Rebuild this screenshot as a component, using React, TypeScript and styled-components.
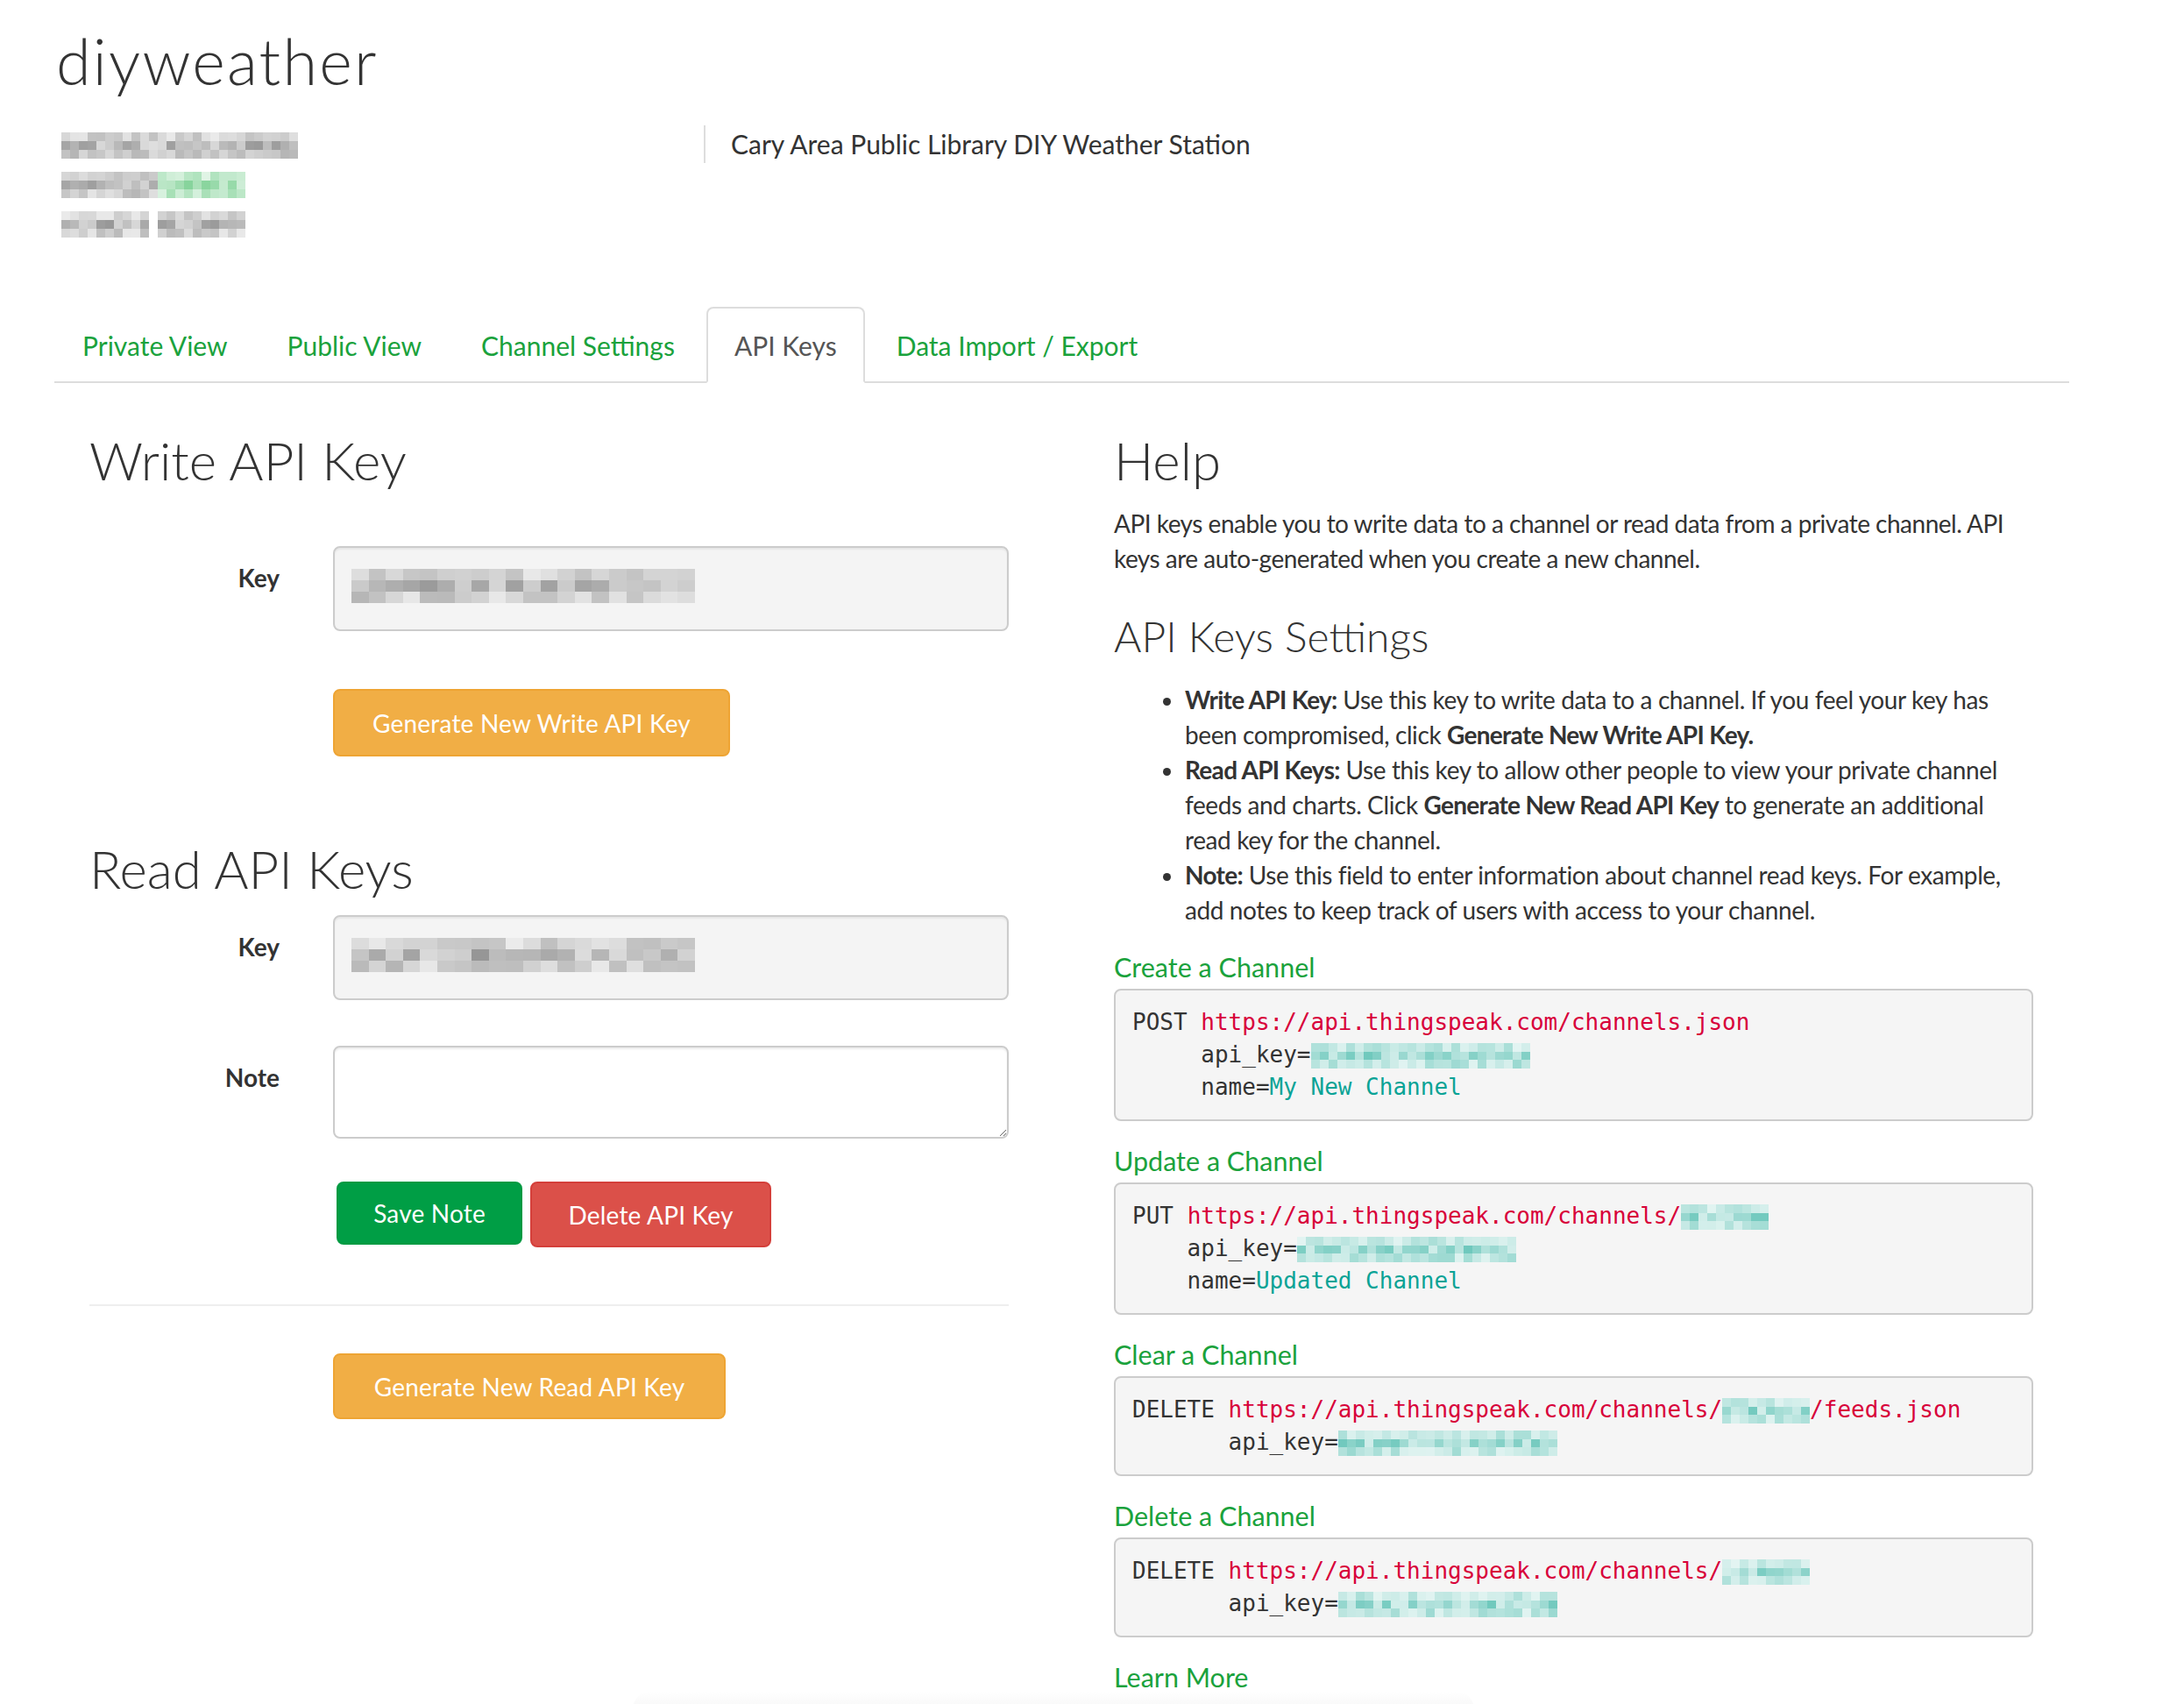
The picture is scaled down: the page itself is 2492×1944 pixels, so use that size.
import React, { useMemo } from "react";
import styled, { createGlobalStyle, css } from "styled-components";

const GREEN = "#1aa23c";

// small seeded generator so the blurred "mosaic" stays the same every render
function seeded(seed: number) {
  let s = seed;
  return () => {
    s = (s + 0x6d2b79f5) | 0;
    let t = Math.imul(s ^ (s >>> 15), 1 | s);
    t = (t + Math.imul(t ^ (t >>> 7), 61 | t)) ^ t;
    return ((t ^ (t >>> 14)) >>> 0) / 4294967296;
  };
}

const tones = {
  gray: "#6c6c6c",
  green: "#46bd66",
  teal: "#37b3a3",
};

function tint(hex: string, t: number) {
  const n = parseInt(hex.slice(1), 16);
  const mixc = (c: number) => Math.round(255 + (c - 255) * t);
  return `rgb(${mixc((n >> 16) & 255)},${mixc((n >> 8) & 255)},${mixc(n & 255)})`;
}

type MosaicProps = {
  cols: number;
  rows?: number;
  cw?: number;
  ch?: number;
  tone?: keyof typeof tones;
  seed?: number;
};

function Mosaic({ cols, rows = 3, cw = 10, ch = 10, tone = "gray", seed = 1 }: MosaicProps) {
  const cells = useMemo(() => {
    const r = seeded(seed * 7919 + cols);
    const out: string[] = [];
    for (let y = 0; y < rows; y++) {
      const rowWeight = y === 0 ? 0.6 : y === rows - 1 ? 0.7 : 1;
      for (let x = 0; x < cols; x++) {
        const t = (0.22 + r() * 0.5) * rowWeight;
        out.push(tint(tones[tone], t));
      }
    }
    return out;
  }, [cols, rows, tone, seed]);

  return (
    <MosaicGrid $cols={cols} $cw={cw} $ch={ch}>
      {cells.map((c, i) => (
        <MosaicCell key={i} style={{ background: c }} />
      ))}
    </MosaicGrid>
  );
}

const tabs = ["Private View", "Public View", "Channel Settings", "API Keys", "Data Import / Export"];

function App() {
  return (
    <>
      <GlobalStyle />
      <Page>
        <ChannelTitle>diyweather</ChannelTitle>
        <Header>
          <Meta>
            <MetaLine>
              <Mosaic cols={27} seed={2} />
            </MetaLine>
            <MetaLine>
              <Mosaic cols={11} seed={5} />
              <Mosaic cols={10} tone="green" seed={6} />
            </MetaLine>
            <MetaLine>
              <Mosaic cols={10} seed={8} />
              <MetaGap />
              <Mosaic cols={10} seed={9} />
            </MetaLine>
          </Meta>
          <Description>Cary Area Public Library DIY Weather Station</Description>
        </Header>

        <TabBar>
          {tabs.map((t) => (
            <Tab key={t} $active={t === "API Keys"}>
              {t}
            </Tab>
          ))}
        </TabBar>

        <Columns>
          <Column>
            <SectionTitle>Write API Key</SectionTitle>
            <FormRow $mt={65}>
              <FieldLabel>Key</FieldLabel>
              <KeyField>
                <Mosaic cols={20} cw={19.6} ch={13} seed={11} />
              </KeyField>
            </FormRow>
            <ButtonRow $mt={66}>
              <Button $tone="warning" $w={453} $h={77}>
                Generate New Write API Key
              </Button>
            </ButtonRow>

            <SectionTitle $mt={95}>Read API Keys</SectionTitle>
            <FormRow $mt={20}>
              <FieldLabel>Key</FieldLabel>
              <KeyField>
                <Mosaic cols={20} cw={19.6} ch={13} seed={12} />
              </KeyField>
            </FormRow>
            <FormRow $mt={52}>
              <FieldLabel>Note</FieldLabel>
              <NoteArea />
            </FormRow>
            <ButtonRow $mt={49}>
              <Button $tone="success" $w={212} $h={72} $ml={4}>
                Save Note
              </Button>
              <Button $tone="danger" $w={275} $h={75}>
                Delete API Key
              </Button>
            </ButtonRow>
            <Divider />
            <ButtonRow $mt={54}>
              <Button $tone="warning" $w={448} $h={75}>
                Generate New Read API Key
              </Button>
            </ButtonRow>
          </Column>

          <Column>
            <SectionTitle>Help</SectionTitle>
            <HelpText>
              API keys enable you to write data to a channel or read data from a private channel. API keys are
              auto-generated when you create a new channel.
            </HelpText>
            <SubTitle>API Keys Settings</SubTitle>
            <HelpList>
              <li>
                <strong>Write API Key:</strong> Use this key to write data to a channel. If you feel your key has
                been compromised, click <strong>Generate New Write API Key.</strong>
              </li>
              <li>
                <strong>Read API Keys:</strong> Use this key to allow other people to view your private channel
                feeds and charts. Click <strong>Generate New Read API Key</strong> to generate an additional read
                key for the channel.
              </li>
              <li>
                <strong>Note:</strong> Use this field to enter information about channel read keys. For example,
                add notes to keep track of users with access to your channel.
              </li>
            </HelpList>

            <ExampleTitle>Create a Channel</ExampleTitle>
            <CodeBox>
              {"POST "}
              <Url>https://api.thingspeak.com/channels.json</Url>
              {"\n     api_key="}
              <Mosaic cols={25} tone="teal" ch={9.5} seed={21} />
              {"\n     name="}
              <Value>My New Channel</Value>
            </CodeBox>

            <ExampleTitle>Update a Channel</ExampleTitle>
            <CodeBox>
              {"PUT "}
              <Url>https://api.thingspeak.com/channels/</Url>
              <Mosaic cols={10} tone="teal" ch={9.5} seed={22} />
              {"\n    api_key="}
              <Mosaic cols={25} tone="teal" ch={9.5} seed={23} />
              {"\n    name="}
              <Value>Updated Channel</Value>
            </CodeBox>

            <ExampleTitle>Clear a Channel</ExampleTitle>
            <CodeBox>
              {"DELETE "}
              <Url>https://api.thingspeak.com/channels/</Url>
              <Mosaic cols={10} tone="teal" ch={9.5} seed={24} />
              <Url>/feeds.json</Url>
              {"\n       api_key="}
              <Mosaic cols={25} tone="teal" ch={9.5} seed={25} />
            </CodeBox>

            <ExampleTitle>Delete a Channel</ExampleTitle>
            <CodeBox>
              {"DELETE "}
              <Url>https://api.thingspeak.com/channels/</Url>
              <Mosaic cols={10} tone="teal" ch={9.5} seed={26} />
              {"\n       api_key="}
              <Mosaic cols={25} tone="teal" ch={9.5} seed={27} />
            </CodeBox>

            <ExampleTitle as="a" href="#">
              Learn More
            </ExampleTitle>
          </Column>
        </Columns>
        <FooterShade />
      </Page>
    </>
  );
}

export default App;

const GlobalStyle = createGlobalStyle`
  html, body {
    margin: 0;
    padding: 0;
    background: #fff;
  }
  body {
    font-family: Lato, "Liberation Sans", sans-serif;
    font-size: 28px;
    line-height: 40px;
    color: #333;
  }
  * {
    box-sizing: border-box;
  }
`;

const Page = styled.div`
  width: 2492px;
  padding-left: 62px;
  overflow: hidden;
`;

const ChannelTitle = styled.h1`
  margin: 29px 0 0 2px;
  font-size: 72px;
  line-height: 80px;
  font-weight: 300;
  letter-spacing: 2.2px;
  color: #333;
`;

const Header = styled.div`
  display: flex;
  align-items: flex-start;
  margin-top: 34px;
`;

const Meta = styled.div`
  width: 741px;
  padding-left: 8px;
  display: flex;
  flex-direction: column;
`;

const MetaLine = styled.div`
  height: 45px;
  display: flex;
  align-items: center;
`;

const MetaGap = styled.span`
  width: 10px;
`;

const Description = styled.div`
  border-left: 2px solid #ddd;
  padding-left: 29px;
  font-size: 30px;
  line-height: 43px;
  color: #333;
`;

const MosaicGrid = styled.span<{ $cols: number; $cw: number; $ch: number }>`
  display: inline-grid;
  vertical-align: middle;
  grid-template-columns: repeat(${(p) => p.$cols}, ${(p) => p.$cw}px);
  grid-auto-rows: ${(p) => p.$ch}px;
`;

const MosaicCell = styled.span`
  display: block;
`;

const TabBar = styled.ul`
  display: flex;
  width: 2299px;
  margin: 72px 0 0;
  padding: 0;
  list-style: none;
  border-bottom: 2px solid #ddd;
`;

const Tab = styled.li<{ $active?: boolean }>`
  margin: 0 4px -2px 0;
  padding: 22px 30px 21px;
  font-size: 30px;
  line-height: 40px;
  border: 2px solid transparent;
  border-radius: 8px 8px 0 0;
  color: ${GREEN};
  cursor: pointer;
  ${(p) =>
    p.$active &&
    css`
      color: #555;
      background: #fff;
      border-color: #ddd #ddd transparent;
    `}
`;

const Columns = styled.div`
  display: grid;
  grid-template-columns: 1049px 1049px;
  column-gap: 120px;
  padding-left: 40px;
  margin-top: 55px;
  align-items: start;
`;

const Column = styled.div`
  display: flex;
  flex-direction: column;
`;

const SectionTitle = styled.h2<{ $mt?: number }>`
  margin: ${(p) => p.$mt ?? 0}px 0 0;
  font-size: 60px;
  line-height: 66px;
  font-weight: 300;
  color: #333;
`;

const SubTitle = styled.h3`
  margin: 42px 0 0;
  font-size: 48px;
  line-height: 53px;
  font-weight: 300;
  color: #333;
`;

const FormRow = styled.div<{ $mt: number }>`
  display: grid;
  grid-template-columns: 217px 771px;
  column-gap: 61px;
  margin-top: ${(p) => p.$mt}px;
`;

const FieldLabel = styled.label`
  text-align: right;
  font-weight: 700;
  padding-top: 16px;
  line-height: 40px;
`;

const KeyField = styled.div`
  height: 97px;
  display: flex;
  align-items: center;
  padding: 0 0 6px 19px;
  background: #f4f4f4;
  border: 2px solid #ccc;
  border-radius: 8px;
  box-shadow: inset 0 2px 2px rgba(0, 0, 0, 0.06);
`;

const NoteArea = styled.textarea`
  height: 106px;
  resize: vertical;
  border: 2px solid #ccc;
  border-radius: 8px;
  box-shadow: inset 0 2px 2px rgba(0, 0, 0, 0.075);
  font: inherit;
  padding: 12px 20px;
  outline: none;
`;

const ButtonRow = styled.div<{ $mt: number }>`
  display: flex;
  align-items: flex-start;
  gap: 9px;
  padding-left: 278px;
  margin-top: ${(p) => p.$mt}px;
`;

const buttonTones = {
  warning: { bg: "#f1ae45", border: "#eea433" },
  success: { bg: "#009e45", border: "#009a42" },
  danger: { bg: "#db5049", border: "#d43f3a" },
};

const Button = styled.button<{ $tone: keyof typeof buttonTones; $w: number; $h: number; $ml?: number }>`
  width: ${(p) => p.$w}px;
  height: ${(p) => p.$h}px;
  margin-left: ${(p) => p.$ml ?? 0}px;
  padding: 0;
  font-family: Lato, "Liberation Sans", sans-serif;
  font-size: 28px;
  letter-spacing: 0.2px;
  color: #fff;
  background: ${(p) => buttonTones[p.$tone].bg};
  border: 2px solid ${(p) => buttonTones[p.$tone].border};
  border-radius: 8px;
  cursor: pointer;
`;

const Divider = styled.hr`
  margin: 65px 0 0;
  border: 0;
  border-top: 2px solid #eee;
`;

const HelpText = styled.p`
  margin: 19px 0 0;
  letter-spacing: -0.5px;
`;

const HelpList = styled.ul`
  margin: 26px 0 0;
  padding: 0 30px 0 81px;
  letter-spacing: -0.4px;

  strong {
    font-weight: 700;
    letter-spacing: -0.7px;
  }
`;

const ExampleTitle = styled.h4`
  display: block;
  margin: 25px 0 5px;
  font-size: 30.5px;
  line-height: 40px;
  font-weight: 400;
  color: ${GREEN};
  text-decoration: none;
`;

const CodeBox = styled.pre`
  margin: 0;
  padding: 18px 19px;
  background: #f5f5f5;
  border: 2px solid #ccc;
  border-radius: 8px;
  font-family: "DejaVu Sans Mono", "Liberation Mono", monospace;
  font-size: 26px;
  line-height: 37px;
  color: #333;
  white-space: pre;
`;

const Url = styled.span`
  color: #d8003a;
`;

const Value = styled.span`
  color: #0aa396;
`;

const FooterShade = styled.div`
  width: 960px;
  height: 20px;
  margin: -8px 0 0 660px;
  border-radius: 40px 40px 0 0;
  background: linear-gradient(#fff, #f7f7f7);
`;
